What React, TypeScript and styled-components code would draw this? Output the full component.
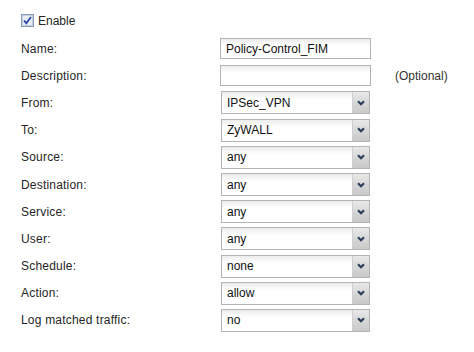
import React from 'react'
import styled, { createGlobalStyle } from 'styled-components'

const GlobalStyle = createGlobalStyle`
    body {
        margin: 0;
        background: #ffffff;
        font-family: "Liberation Sans", Arial, sans-serif;
        font-size: 12px;
        color: #262626;
    }
`

const Page = styled.div`
    width: 474px;
    height: 352px;
    padding: 7px 0 0 21px;
    box-sizing: border-box;
`

const EnableRow = styled.label`
    display: flex;
    align-items: center;
    gap: 4px;
    height: 27px;
    margin-bottom: 1px;
`

const Form = styled.div`
    display: grid;
    grid-template-columns: 199px 151px auto;
    grid-auto-rows: 27.2px;
    align-items: center;
`

const Label = styled.div`
    white-space: nowrap;
    letter-spacing: 0.2px;
`

const Hint = styled.div`
    padding-left: 24px;
    color: #333;
`

const Field = styled.div<{ $select?: boolean }>`
    display: flex;
    align-items: stretch;
    height: ${p => (p.$select ? 23 : 21)}px;
    width: ${p => (p.$select ? 149 : 151)}px;
    margin-left: ${p => (p.$select ? 1 : 0)}px;
    box-sizing: border-box;
    border: 1px solid #b4b4b4;
    background: linear-gradient(#ececec, #ffffff 35%, #ffffff);
`

const Value = styled.div`
    flex: 1;
    display: flex;
    align-items: center;
    padding-left: 5px;
    color: #111;
`

const DropButton = styled.div`
    width: 16px;
    display: flex;
    align-items: center;
    justify-content: center;
    border-left: 1px solid #cfcfcf;
    background: linear-gradient(#e9e9e9, #d4d4d4 60%, #c9c9c9);
`

function Chevron(): React.ReactElement {
    return (
        <svg width="8" height="6" viewBox="0 0 8 6">
            <path d="M1 1.2 L4 4.2 L7 1.2" fill="none" stroke="#2c3d5c" strokeWidth="2.2" />
        </svg>
    )
}

function CheckBox(): React.ReactElement {
    return (
        <svg width="13" height="13" viewBox="0 0 13 13">
            <rect x="0.5" y="0.5" width="12" height="12" fill="#dfe6f1" stroke="#8a9bb6" />
            <rect x="1.5" y="1.5" width="10" height="10" fill="#e9eef6" stroke="#c3cfe0" />
            <path d="M3 6.5 L5.3 9.2 L10 3" fill="none" stroke="#2a47a8" strokeWidth="1.8" />
        </svg>
    )
}

const rows: Array<{ label: string, value: string }> = [
    { label: 'From:', value: 'IPSec_VPN' },
    { label: 'To:', value: 'ZyWALL' },
    { label: 'Source:', value: 'any' },
    { label: 'Destination:', value: 'any' },
    { label: 'Service:', value: 'any' },
    { label: 'User:', value: 'any' },
    { label: 'Schedule:', value: 'none' },
    { label: 'Action:', value: 'allow' },
    { label: 'Log matched traffic:', value: 'no' },
]

export default function App(): React.ReactElement {
    return <>
        <GlobalStyle />
        <Page>
            <EnableRow>
                <CheckBox />
                <span>Enable</span>
            </EnableRow>
            <Form>
                <Label>Name:</Label>
                <Field><Value>Policy-Control_FIM</Value></Field>
                <div />
                <Label>Description:</Label>
                <Field><Value /></Field>
                <Hint>(Optional)</Hint>
                {rows.map(row => (
                    <React.Fragment key={row.label}>
                        <Label>{row.label}</Label>
                        <Field $select>
                            <Value>{row.value}</Value>
                            <DropButton><Chevron /></DropButton>
                        </Field>
                        <div />
                    </React.Fragment>
                ))}
            </Form>
        </Page>
    </>
}
